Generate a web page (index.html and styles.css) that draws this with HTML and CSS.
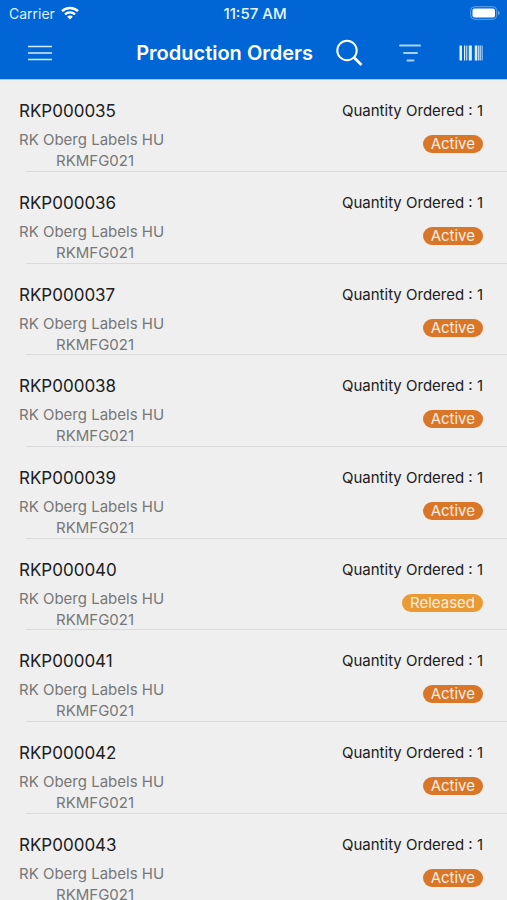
FILE: index.html
```html
<!DOCTYPE html>
<html lang="en">
<head>
<meta charset="utf-8">
<meta name="viewport" content="width=device-width, initial-scale=1">
<title>Production Orders</title>
<link rel="stylesheet" href="styles.css">
</head>
<body>
<header class="top">
  <div class="status">
    <div class="carrier">
      <span>Carrier</span>
      <svg width="18" height="14" viewBox="0 0 18 14" fill="none" stroke="#fff" stroke-width="2.4" aria-hidden="true">
        <path d="M1 5.2C5.4.9 12.600.9 17 5.200"/>
        <path d="M4 8.400c2.800-2.700 7.200-2.700 10 0"/>
        <path d="M9 13.600 6.200 10.700c1.500-1.500 4.100-1.500 5.600 0z" fill="#fff" stroke="none"/>
      </svg>
    </div>
    <time>11:57 AM</time>
    <svg class="battery" width="31" height="14" viewBox="0 0 31 14" aria-hidden="true">
      <rect x=".7" y=".7" width="26" height="12.600" rx="4" fill="none" stroke="#65a3e8" stroke-width="1"/>
      <rect x="2.500" y="2.500" width="22.500" height="9" rx="2" fill="#fff"/>
      <path d="M28.200 4.800v4.400c2-.8 2-3.600 0-4.400z" fill="#7fb2ec"/>
    </svg>
  </div>
  <nav class="bar">
    <button class="icon" type="button" aria-label="Menu">
      <svg width="24" height="16" viewBox="0 0 24 16" stroke="#d3edff" stroke-width="1.400"><path d="M0 1.500h24M0 8h24M0 14.500h24"/></svg>
    </button>
    <h1>Production Orders</h1>
    <div class="actions">
      <button class="icon" type="button" aria-label="Search">
        <svg width="28" height="28" viewBox="0 0 28 28" fill="none" stroke="#fff" stroke-width="2"><circle cx="12" cy="11.500" r="9.700"/><path d="m19 18.500 7.500 7.500" stroke-width="2.600"/></svg>
      </button>
      <button class="icon" type="button" aria-label="Filter">
        <svg width="24" height="20" viewBox="0 0 24 20" stroke="#a9d2fb" stroke-width="2" stroke-linecap="round"><path d="M2 2.500h20M6 10h13M9.500 17.500h6"/></svg>
      </button>
      <button class="icon" type="button" aria-label="Scan barcode">
        <svg width="24" height="16" viewBox="0 0 24 16" fill="#e4f3ff"><path d="M.5.500h2.500v15H.5zM5 .5h1.200v15H5zM7.300.500h1v15h-1zM9.800.500h3v15h-3zM15.800.500h2.500v15h-2.500zM19.200.500h1.200v15h-1.200zM21.200.500h.7v15h-.7zM22.700.500h.8v15h-.8z"/></svg>
      </button>
    </div>
  </nav>
</header>
<main>
  <ul class="orders">
    <li class="order"><div class="info"><h2>RKP000035</h2><p>RK Oberg Labels HU</p><p class="item">RKMFG021</p></div><div class="side"><span class="qty">Quantity Ordered : 1</span><span class="badge">Active</span></div></li>
    <li class="order"><div class="info"><h2>RKP000036</h2><p>RK Oberg Labels HU</p><p class="item">RKMFG021</p></div><div class="side"><span class="qty">Quantity Ordered : 1</span><span class="badge">Active</span></div></li>
    <li class="order"><div class="info"><h2>RKP000037</h2><p>RK Oberg Labels HU</p><p class="item">RKMFG021</p></div><div class="side"><span class="qty">Quantity Ordered : 1</span><span class="badge">Active</span></div></li>
    <li class="order"><div class="info"><h2>RKP000038</h2><p>RK Oberg Labels HU</p><p class="item">RKMFG021</p></div><div class="side"><span class="qty">Quantity Ordered : 1</span><span class="badge">Active</span></div></li>
    <li class="order"><div class="info"><h2>RKP000039</h2><p>RK Oberg Labels HU</p><p class="item">RKMFG021</p></div><div class="side"><span class="qty">Quantity Ordered : 1</span><span class="badge">Active</span></div></li>
    <li class="order"><div class="info"><h2>RKP000040</h2><p>RK Oberg Labels HU</p><p class="item">RKMFG021</p></div><div class="side"><span class="qty">Quantity Ordered : 1</span><span class="badge released">Released</span></div></li>
    <li class="order"><div class="info"><h2>RKP000041</h2><p>RK Oberg Labels HU</p><p class="item">RKMFG021</p></div><div class="side"><span class="qty">Quantity Ordered : 1</span><span class="badge">Active</span></div></li>
    <li class="order"><div class="info"><h2>RKP000042</h2><p>RK Oberg Labels HU</p><p class="item">RKMFG021</p></div><div class="side"><span class="qty">Quantity Ordered : 1</span><span class="badge">Active</span></div></li>
    <li class="order"><div class="info"><h2>RKP000043</h2><p>RK Oberg Labels HU</p><p class="item">RKMFG021</p></div><div class="side"><span class="qty">Quantity Ordered : 1</span><span class="badge">Active</span></div></li>
  </ul>
</main>
</body>
</html>
```
FILE: styles.css
```css
* { box-sizing: border-box; margin: 0; padding: 0; }

html { scrollbar-width: none; }

body {
  background: #efefef;
  color: #202020;
  font-family: Inter, "Liberation Sans", sans-serif;
}

.top {
  position: sticky;
  top: 0;
  z-index: 1;
  background: #0066d6;
  border-bottom: 1px solid #a5c9ee;
  color: #fff;
}

.status {
  display: grid;
  grid-template-columns: 1fr auto 1fr;
  align-items: center;
  height: 26px;
  padding: 0 6px 0 9px;
  font-size: 14px;
}

.carrier { display: flex; align-items: center; gap: 6px; color: #dff0ff; }
.status time { font-size: 15px; font-weight: 500; color: #e8f5ff; }
.battery { justify-self: end; }

.bar {
  display: flex;
  align-items: center;
  height: 53px;
  padding: 0 22px 0 26px;
}

.bar h1 {
  margin: 0 22px 0 auto;
  font-size: 20px;
  line-height: 24px;
  font-weight: 600;
  white-space: nowrap;
}

.icon {
  display: flex;
  align-items: center;
  justify-content: center;
  width: 28px;
  height: 32px;
  border: 0;
  background: none;
  cursor: pointer;
}

.actions { display: flex; gap: 33px; }

.orders {
  display: grid;
  grid-auto-rows: minmax(92px, auto) minmax(92px, auto) minmax(91px, auto);
  list-style: none;
}

.order {
  display: flex;
  justify-content: space-between;
  padding: 20px 24px 0 19px;
  background: linear-gradient(#dadada, #dadada) 26px 100% / 100% 1px no-repeat;
}

.info p { font-size: 15px; line-height: 21px; color: #777; }
.info h2 { margin-bottom: 7px; font-size: 17px; line-height: 22px; font-weight: 400; }
.info .item { padding-left: 37px; }

.side { display: flex; flex-direction: column; align-items: flex-end; gap: 13px; }
.qty { font-size: 15px; line-height: 22px; }

.badge {
  padding: 0 8px;
  border-radius: 9px;
  background: #da7627;
  color: #fbeee2;
  font-size: 15px;
  line-height: 18px;
}

.badge.released { background: #eb9932; }
```
